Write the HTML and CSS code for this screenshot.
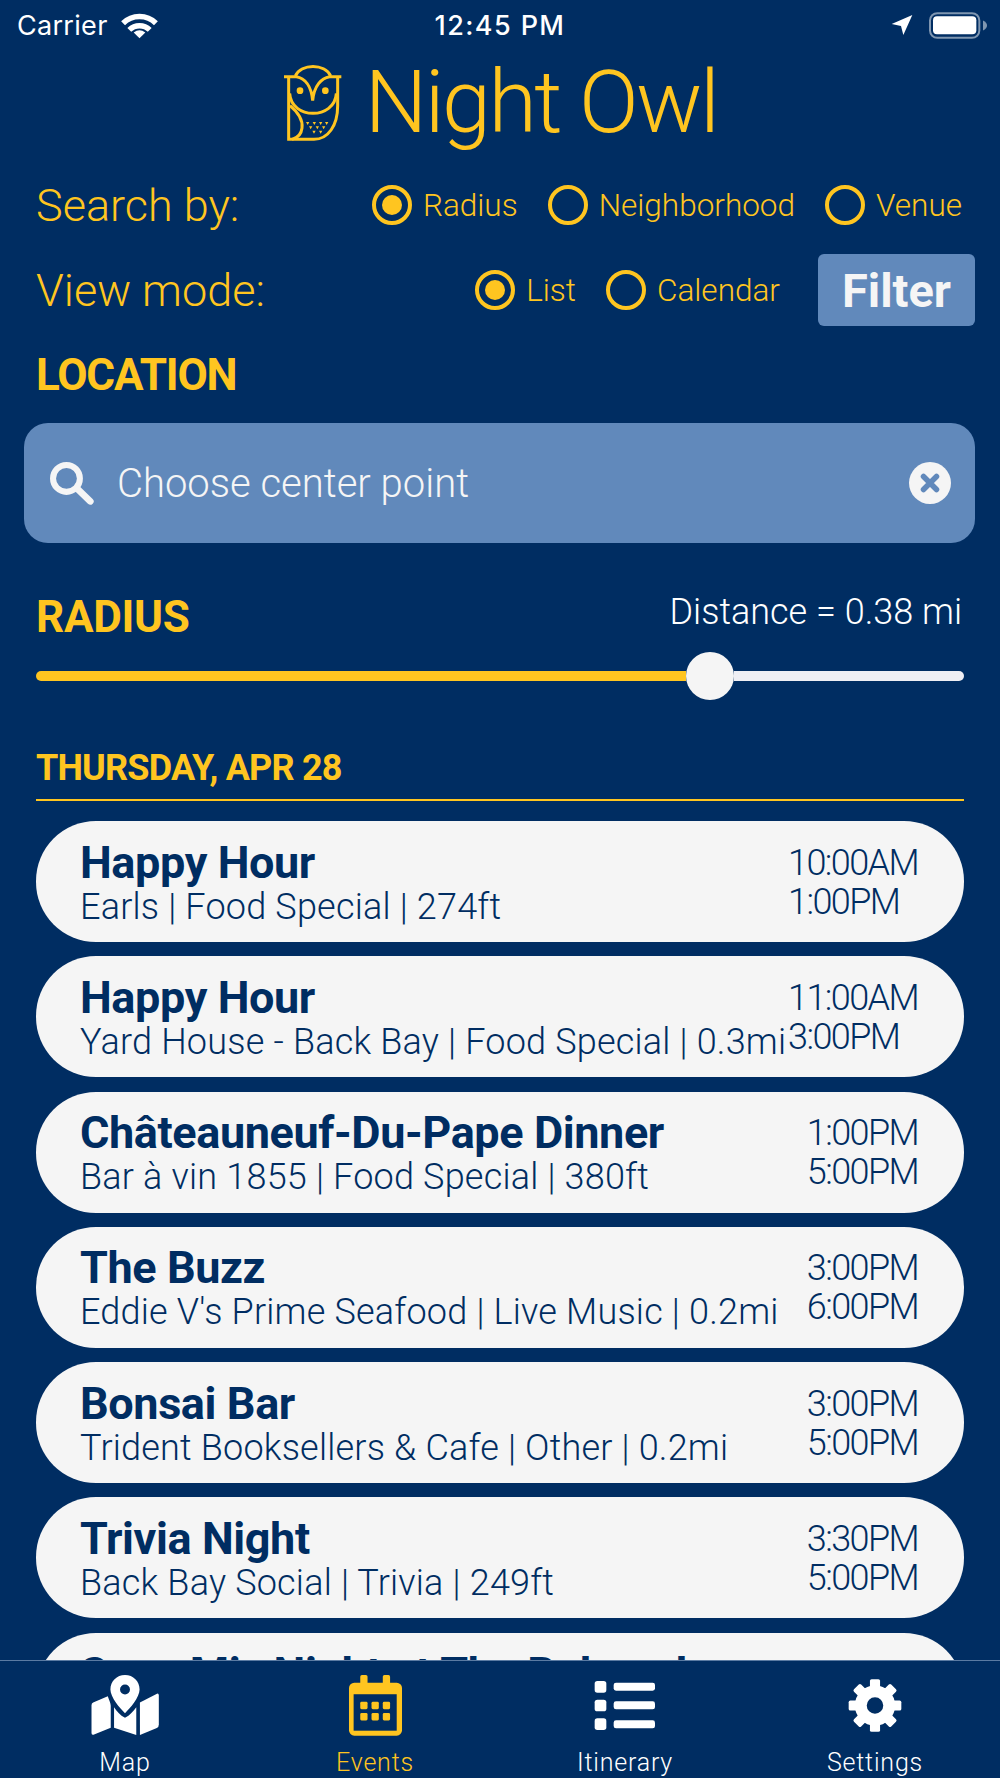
FILE: index.html
```html
<!DOCTYPE html>
<html lang="en">
<head>
    <meta charset="UTF-8">
    <meta name="viewport" content="width=device-width, initial-scale=1.0">
    <title>Night Owl</title>
    <link rel="stylesheet" href="styles.css">
</head>
<body>

<div class="app">
    <!-- iOS status bar -->
    <div class="status-bar">
        <div class="status-left">
            <span>Carrier</span>
            <svg class="wifi" viewBox="360 36 112 74">
                <path d="M371 67A64 64 0 0 1 461 67" fill="none" stroke="#fff" stroke-width="15"/>
                <path d="M388 85A40 40 0 0 1 444 85" fill="none" stroke="#fff" stroke-width="15"/>
                <path d="M416 108L400 92Q416 80 432 92Z" fill="#fff"/>
            </svg>
        </div>
        <div class="status-time">12:45 PM</div>
        <div class="status-right">
            <svg class="arrow" viewBox="38 42 66 66"><path d="M40 72L102 45L75 105L68 78Z" fill="#fff"/></svg>
            <svg class="battery" viewBox="145 32 180 86">
                <rect x="151" y="38" width="148" height="74" rx="22" fill="none" stroke="#7f96b0" stroke-width="6"/>
                <rect x="160" y="47" width="130" height="54" rx="12" fill="#fff"/>
                <path d="M310 60Q322 66 322 75Q322 84 310 90Z" fill="#7f96b0"/>
            </svg>
        </div>
    </div>

    <!-- Title -->
    <div class="title">
        <svg class="owl" viewBox="35 40 180 240" fill="none" stroke="#ffc520" stroke-width="9">
            <path d="M38 78H75C100 82 120 105 124 150C128 105 150 82 175 78H210"/>
            <path d="M72 76C90 38 160 38 178 76"/>
            <path d="M52 80V266H128C170 266 199 225 199 165V80"/>
            <path d="M55 128C60 208 190 208 195 128"/>
            <path d="M56 165C80 185 95 210 92 232C90 250 78 262 62 266"/>
            <circle cx="86" cy="120" r="10" fill="#ffc520" stroke="none"/>
            <circle cx="162" cy="120" r="10" fill="#ffc520" stroke="none"/>
            <path d="M104 214h10l-5 9zM124 214h10l-5 9zM143 214h10l-5 9zM161 214h10l-5 9zM113 227h10l-5 9zM133 227h10l-5 9zM152 227h10l-5 9zM123 240h10l-5 9zM143 240h10l-5 9z" fill="#ffc520" stroke="none"/>
        </svg>
        <span>Night Owl</span>
    </div>

    <div class="form">
        <div class="form-row row-search">
            <div class="form-label">Search by:</div>
            <div class="radio-group">
                <div class="radio checked"><i></i><span>Radius</span></div>
                <div class="radio"><i></i><span>Neighborhood</span></div>
                <div class="radio"><i></i><span>Venue</span></div>
            </div>
        </div>

        <div class="form-row row-view">
            <div class="form-label">View mode:</div>
            <div class="radio-group">
                <div class="radio checked"><i></i><span>List</span></div>
                <div class="radio"><i></i><span>Calendar</span></div>
                <button class="filter-btn">Filter</button>
            </div>
        </div>

        <div class="section-title location-title">LOCATION</div>

        <div class="search-box">
            <svg class="search-icon" viewBox="50 25 140 140" fill="none" stroke="#f5f5f5" stroke-linecap="round">
                <circle cx="105" cy="80" r="40" stroke-width="18"/>
                <path d="M140 113L176 148" stroke-width="20"/>
            </svg>
            <span class="search-text">Choose center point</span>
            <svg class="clear-icon" viewBox="0 0 42 42">
                <circle cx="21" cy="21" r="21" fill="#f5f5f5"/>
                <path d="M14.5 14.5L27.5 27.5M27.5 14.5L14.5 27.5" stroke="#6189bb" stroke-width="5.5" stroke-linecap="round"/>
            </svg>
        </div>

        <div class="radius-head">
            <div class="section-title radius-title">RADIUS</div>
            <div class="distance">Distance = 0.38 mi</div>
        </div>

        <div class="slider">
            <div class="slider-fill"></div>
            <div class="slider-thumb"></div>
            <div class="slider-rest"></div>
        </div>

        <div class="date-head">THURSDAY, APR 28</div>
    </div>

    <!-- Event list, last card runs under the tab bar -->
    <div class="events">
        <div class="event">
            <div class="event-info"><div class="event-name">Happy Hour</div><div class="event-sub">Earls | Food Special | 274ft</div></div>
            <div class="event-time">10:00AM<br>1:00PM</div>
        </div>
        <div class="event">
            <div class="event-info"><div class="event-name">Happy Hour</div><div class="event-sub">Yard House - Back Bay | Food Special | 0.3mi</div></div>
            <div class="event-time">11:00AM<br>3:00PM</div>
        </div>
        <div class="event">
            <div class="event-info"><div class="event-name">Châteauneuf-Du-Pape Dinner</div><div class="event-sub">Bar à vin 1855 | Food Special | 380ft</div></div>
            <div class="event-time">1:00PM<br>5:00PM</div>
        </div>
        <div class="event">
            <div class="event-info"><div class="event-name">The Buzz</div><div class="event-sub">Eddie V's Prime Seafood | Live Music | 0.2mi</div></div>
            <div class="event-time">3:00PM<br>6:00PM</div>
        </div>
        <div class="event">
            <div class="event-info"><div class="event-name">Bonsai Bar</div><div class="event-sub">Trident Booksellers &amp; Cafe | Other | 0.2mi</div></div>
            <div class="event-time">3:00PM<br>5:00PM</div>
        </div>
        <div class="event">
            <div class="event-info"><div class="event-name">Trivia Night</div><div class="event-sub">Back Bay Social | Trivia | 249ft</div></div>
            <div class="event-time">3:30PM<br>5:00PM</div>
        </div>
        <div class="event">
            <div class="event-info"><div class="event-name">Soca Mix Night at The Beloved</div><div class="event-sub">The Beloved | Live Music | 0.2mi</div></div>
            <div class="event-time">6:00PM<br>9:00PM</div>
        </div>
    </div>

    <!-- Tab bar -->
    <div class="tabbar">
        <div class="tab">
            <svg class="tab-icon icon-map" viewBox="90 100 210 190" fill="#fff">
                <path fill-rule="evenodd" d="M195 103C170 103 151 122 151 147C151 170 180 205 195 218C210 205 239 170 239 147C239 122 220 103 195 103ZM195 132A15 15 0 1 1 195 162A15 15 0 1 1 195 132Z"/>
                <path d="M99 186L143 167C147 178 152 188 152 196V262L100 283Q94 285 94 278V194Q94 188 99 186Z"/>
                <path d="M162 200C170 212 180 224 195 232C210 224 220 212 229 200V284L162 262Z"/>
                <path d="M240 186L290 160Q297 157 297 165V252Q297 260 291 263L240 284Z"/>
            </svg>
            <span>Map</span>
        </div>
        <div class="tab tab-active">
            <svg class="tab-icon icon-cal" viewBox="860 100 172 188">
                <rect x="900" y="102" width="22" height="40" rx="5" fill="#ffc520"/>
                <rect x="968" y="102" width="22" height="40" rx="5" fill="#ffc520"/>
                <rect x="866" y="125" width="160" height="160" rx="16" fill="#ffc520"/>
                <rect x="880" y="160" width="130" height="110" fill="#002d62"/>
                <g fill="#ffc520">
                    <rect x="900" y="183" width="22" height="22" rx="4"/>
                    <rect x="934" y="183" width="22" height="22" rx="4"/>
                    <rect x="968" y="183" width="22" height="22" rx="4"/>
                    <rect x="900" y="217" width="22" height="22" rx="4"/>
                    <rect x="934" y="217" width="22" height="22" rx="4"/>
                    <rect x="968" y="217" width="22" height="22" rx="4"/>
                </g>
            </svg>
            <span>Events</span>
        </div>
        <div class="tab">
            <svg class="tab-icon icon-list" viewBox="100 115 192 157" fill="#fff">
                <rect x="105" y="120" width="35" height="35" rx="8"/>
                <rect x="105" y="176" width="35" height="35" rx="8"/>
                <rect x="105" y="232" width="35" height="35" rx="8"/>
                <rect x="162" y="125" width="124" height="24" rx="7"/>
                <rect x="162" y="181" width="124" height="24" rx="7"/>
                <rect x="162" y="238" width="124" height="24" rx="7"/>
            </svg>
            <span>Itinerary</span>
        </div>
        <div class="tab">
            <svg class="tab-icon icon-gear" viewBox="-80 -80 160 160" fill="#fff">
                <circle r="42" fill="none" stroke="#fff" stroke-width="35"/>
                <rect x="-15" y="-78" width="30" height="30" rx="5"/>
                <rect x="-15" y="-78" width="30" height="30" rx="5" transform="rotate(45)"/>
                <rect x="-15" y="-78" width="30" height="30" rx="5" transform="rotate(90)"/>
                <rect x="-15" y="-78" width="30" height="30" rx="5" transform="rotate(135)"/>
                <rect x="-15" y="-78" width="30" height="30" rx="5" transform="rotate(180)"/>
                <rect x="-15" y="-78" width="30" height="30" rx="5" transform="rotate(225)"/>
                <rect x="-15" y="-78" width="30" height="30" rx="5" transform="rotate(270)"/>
                <rect x="-15" y="-78" width="30" height="30" rx="5" transform="rotate(315)"/>
            </svg>
            <span>Settings</span>
        </div>
    </div>
</div>

</body>
</html>
```

FILE: styles.css
```css
* {
    box-sizing: border-box;
}
body {
    margin: 0;
    background-color: #002d62;
    font-family: Roboto, "Liberation Sans", sans-serif;
    color: #ffc520;
}
.app {
    width: 1000px;
    height: 1778px;
    display: flex;
    flex-direction: column;
    overflow: hidden;
}

/* status bar */
.status-bar {
    height: 44px;
    flex: none;
    display: grid;
    grid-template-columns: 1fr auto 1fr;
    align-items: center;
    padding: 6px 17px 0;
    color: #fff;
    font-family: Inter, sans-serif;
}
.status-left {
    display: flex;
    align-items: center;
    gap: 11px;
    font-size: 27px;
    letter-spacing: 0.3px;
}
.wifi {
    width: 41px;
    height: 27px;
}
.status-time {
    font-size: 27px;
    font-weight: 500;
    letter-spacing: 1.4px;
}
.status-right {
    display: flex;
    justify-content: flex-end;
    align-items: center;
    gap: 15px;
    margin-right: -5px;
}
.arrow {
    width: 22px;
    height: 22px;
}
.battery {
    width: 60px;
    height: 29px;
}

/* title */
.title {
    height: 120px;
    flex: none;
    display: flex;
    justify-content: center;
    align-items: center;
    gap: 22px;
    font-size: 88px;
    font-weight: 300;
    letter-spacing: -2.5px;
}
.title span {
    margin-bottom: 5px;
}
.owl {
    width: 60px;
    height: 80px;
}

/* form */
.form {
    flex: none;
    padding: 0 36px;
}
.form-row {
    display: flex;
    justify-content: space-between;
    align-items: center;
}
.row-search {
    height: 82px;
    padding-right: 2px;
}
.row-view {
    height: 72px;
    margin-top: 8px;
    margin-right: -11px;
}
.form-label {
    font-size: 45px;
    font-weight: 300;
}
.radio-group {
    display: flex;
    align-items: center;
    gap: 30px;
}
.radio {
    display: flex;
    align-items: center;
    gap: 11px;
    font-size: 31.5px;
    font-weight: 300;
}
.radio i {
    width: 40px;
    height: 40px;
    border: 4px solid #ffc520;
    border-radius: 50%;
    display: flex;
    justify-content: center;
    align-items: center;
}
.radio.checked i::after {
    content: "";
    width: 20px;
    height: 20px;
    border-radius: 50%;
    background-color: #ffc520;
}
.filter-btn {
    width: 157px;
    height: 72px;
    margin-left: 8px;
    background-color: #6189bb;
    color: #f5f5f5;
    border: none;
    border-radius: 6px;
    font-family: inherit;
    font-size: 47px;
    font-weight: 700;
    padding: 0;
}
.section-title {
    font-size: 44px;
    font-weight: 700;
    letter-spacing: -1.2px;
    line-height: 50px;
}
.location-title {
    margin-top: 24px;
}
.radius-title {
    letter-spacing: -0.3px;
    padding-top: 2px;
}
.search-box {
    height: 120px;
    margin: 23px -11px 0 -12px;
    background-color: #6189bb;
    border-radius: 24px;
    display: flex;
    align-items: center;
    padding: 0 24px;
    color: #f5f5f5;
}
.search-icon {
    width: 47px;
    height: 47px;
    flex: none;
}
.search-text {
    flex: 1;
    margin-left: 22px;
    font-size: 40px;
    font-weight: 300;
}
.clear-icon {
    width: 42px;
    height: 42px;
    flex: none;
}
.radius-head {
    height: 50px;
    margin-top: 47px;
    display: flex;
    justify-content: space-between;
    align-items: flex-start;
}
.distance {
    font-size: 36px;
    font-weight: 300;
    line-height: 44px;
    color: #fff;
    padding-right: 2px;
}
.slider {
    height: 48px;
    margin-top: 12px;
    display: flex;
    align-items: center;
}
.slider-fill {
    flex: 650;
    height: 10px;
    background-color: #ffc520;
    border-radius: 5px 0 0 5px;
}
.slider-thumb {
    width: 48px;
    height: 48px;
    flex: none;
    border-radius: 50%;
    background-color: #f5f5f5;
}
.slider-rest {
    flex: 230;
    height: 10px;
    background-color: #efeff4;
    border-radius: 0 5px 5px 0;
}
.date-head {
    height: 56px;
    margin-top: 45px;
    border-bottom: 2px solid #ffc520;
    font-size: 36px;
    font-weight: 700;
    letter-spacing: -0.8px;
    line-height: 47px;
}

/* events */
.events {
    flex: 1;
    min-height: 0;
    overflow: hidden;
    padding: 20px 36px 0;
    display: flex;
    flex-direction: column;
    gap: 14.3px;
}
.event {
    height: 121px;
    flex: none;
    padding: 2px 46px 0 44px;
    background-color: #f5f5f5;
    border-radius: 60px;
    color: #002d62;
    display: flex;
    justify-content: space-between;
    align-items: center;
}
.event-info {
    white-space: nowrap;
}
.event-name {
    font-size: 45px;
    font-weight: 700;
    line-height: 48px;
    letter-spacing: -0.4px;
}
.event-sub {
    font-size: 36px;
    font-weight: 300;
    line-height: 40px;
    letter-spacing: 0.2px;
}
.event-time {
    font-size: 36px;
    font-weight: 300;
    line-height: 39px;
    letter-spacing: -1.6px;
}

/* tab bar */
.tabbar {
    height: 118px;
    flex: none;
    display: flex;
    border-top: 1px solid #5b7ba3;
    background-color: #002d62;
    color: #fff;
    font-size: 25px;
    font-weight: 300;
    letter-spacing: 0.8px;
}
.tab {
    flex: 1;
    display: flex;
    flex-direction: column;
    align-items: center;
    padding-top: 13px;
}
.tab span {
    margin-top: 12px;
    line-height: 28px;
}
.tab-active {
    color: #ffc520;
}
.tab-icon {
    height: 63px;
}
.icon-map {
    width: 70px;
}
.icon-cal {
    width: 57px;
}
.icon-list {
    width: 64px;
}
.icon-gear {
    width: 54px;
}
```
